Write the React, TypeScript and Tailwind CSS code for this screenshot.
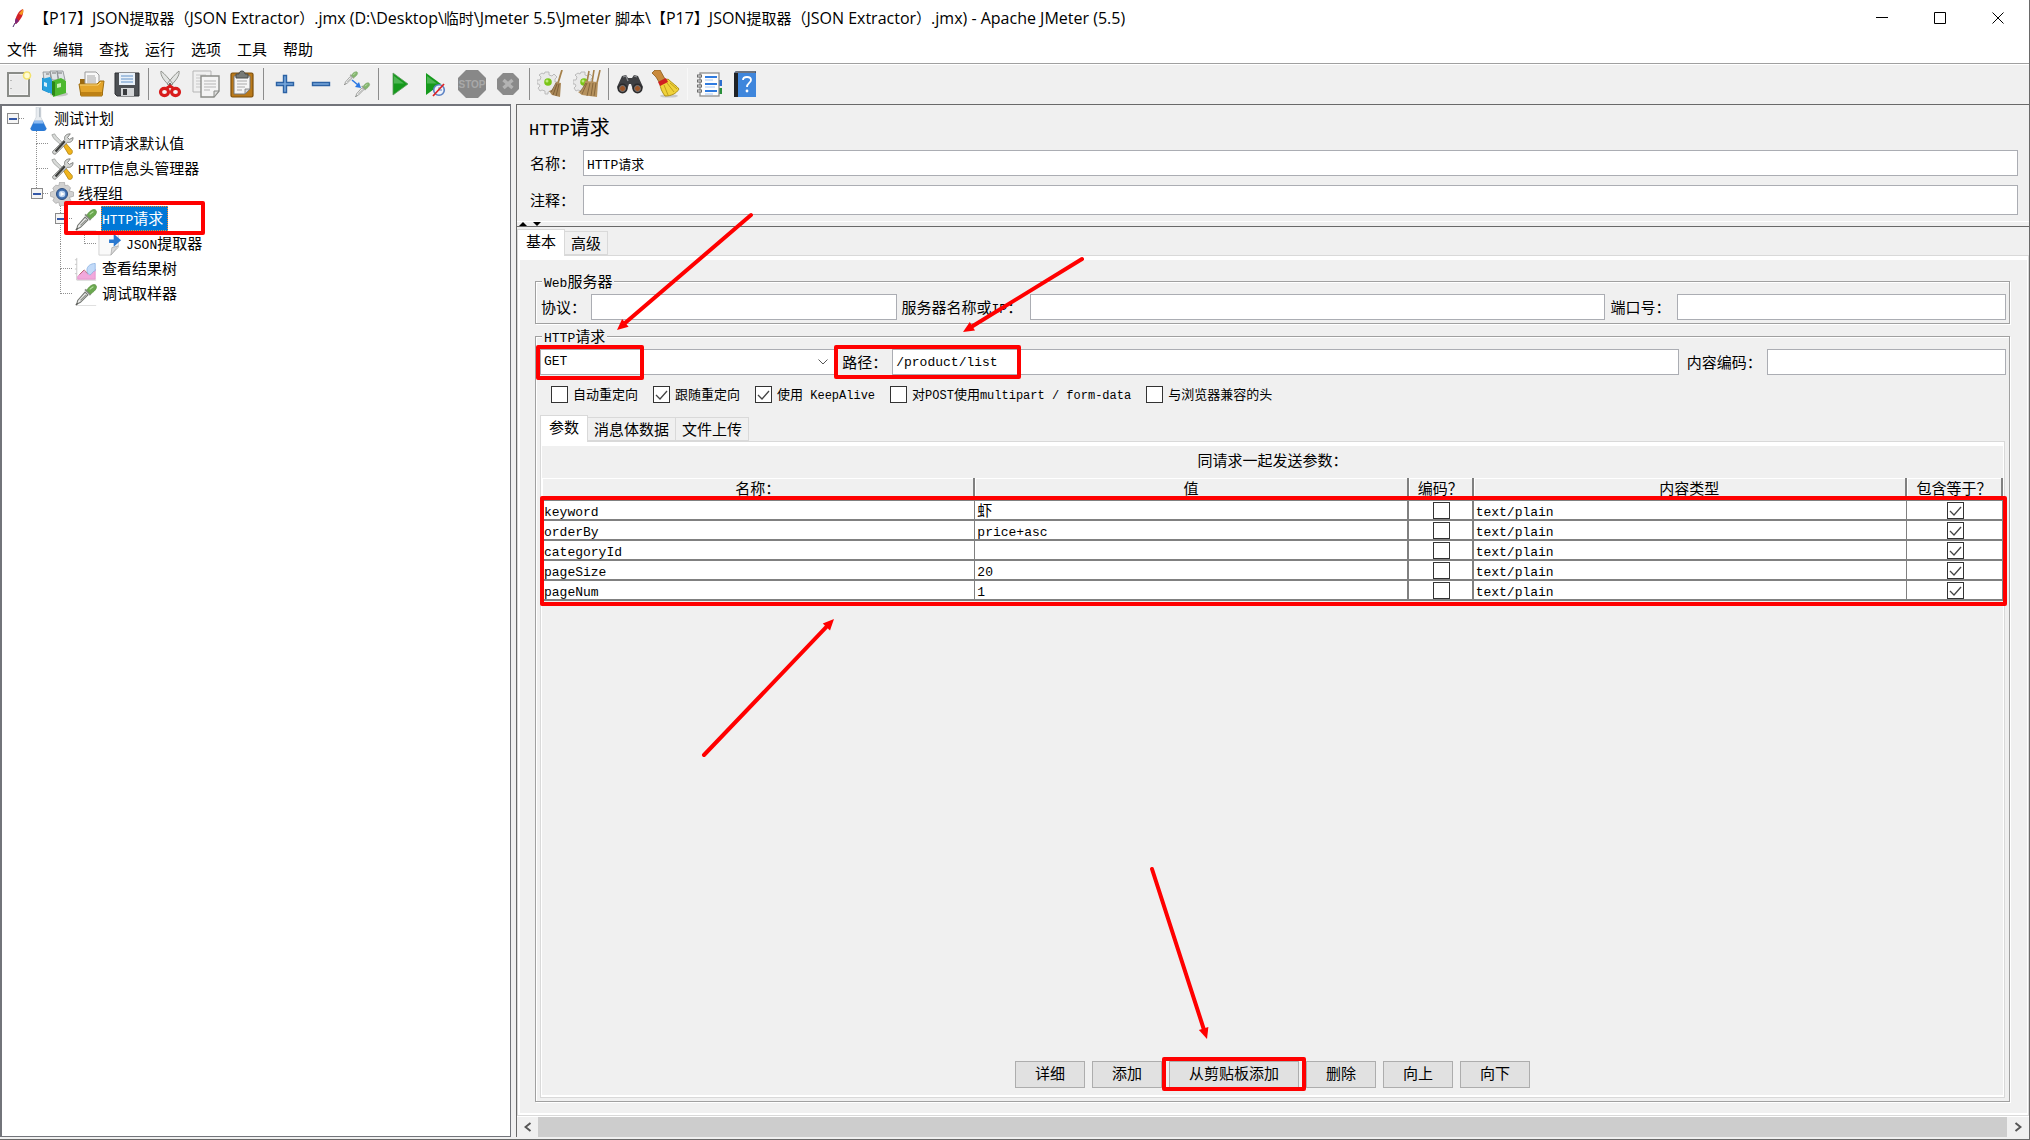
import { Fragment, useState } from 'react';
import type { ReactNode } from 'react';

const MENUS = ['文件', '编辑', '查找', '运行', '选项', '工具', '帮助'];

const PARAMS = [
  { name: 'keyword', value: '虾' },
  { name: 'orderBy', value: 'price+asc' },
  { name: 'categoryId', value: '' },
  { name: 'pageSize', value: '20' },
  { name: 'pageNum', value: '1' },
];

const field = 'h-[26px] min-w-0 border border-[#abadb3] bg-white px-[3px] text-[13px] outline-none font-["Liberation_Mono","Noto_Sans_CJK_SC",monospace]';
const mono = 'font-["Liberation_Mono",monospace]';

// Latin runs get their own face and size beside the Chinese text
function Text({ children, latin = `text-[13px] ${mono}` }: { children: string; latin?: string }) {
  const parts = children.split(/([\x20-\x7e]+)/).filter(Boolean);
  return (
    <>
      {parts.map((p, i) =>
        /^[\x20-\x7e]/.test(p) ? (
          <span key={i} className={`leading-none whitespace-pre ${latin}`}>{p}</span>
        ) : (
          <Fragment key={i}>{p}</Fragment>
        )
      )}
    </>
  );
}

function Mark({ className }: { className: string }) {
  return <span className={`pointer-events-none absolute z-10 rounded-[2px] border-4 border-[#ff0000] ${className}`} />;
}

function Checkbox({ id, label, checked = false }: { id: string; label?: string; checked?: boolean }) {
  return (
    <span className="relative block h-[17px] w-[17px] shrink-0">
      <input id={id} type="checkbox" aria-label={label} defaultChecked={checked} className="peer block h-[17px] w-[17px] appearance-none border border-[#333] bg-white" />
      <svg viewBox="0 0 17 17" className="pointer-events-none absolute inset-0 hidden peer-checked:block" fill="none" stroke="#444" strokeWidth="1.3">
        <path d="M3 9l4 4 7-8" />
      </svg>
    </span>
  );
}

/* ---------- toolbar icons ---------- */

function Icon({ children }: { children: ReactNode }) {
  return <svg viewBox="0 0 28 28" className="h-7 w-7">{children}</svg>;
}

const page = { fill: '#f4f4f4', stroke: '#8a8c88', strokeWidth: 1.4 };

const NewIcon = () => (
  <Icon>
    <rect x="3" y="3" width="21" height="23" {...page} strokeWidth="2" />
    <rect x="5" y="5" width="17" height="19" fill="#ebebeb" />
    <path d="M6 10v1M6 18v1" stroke="#888" />
    <circle cx="22" cy="5.500" r="3.500" fill="#fffbd0" stroke="#f3e26c" strokeWidth="1.600" />
  </Icon>
);

const TemplatesIcon = () => (
  <Icon>
    <ellipse cx="18" cy="24" rx="9" ry="2.500" fill="#c4c4c4" />
    <path d="M1 8l7-2v17l-7-3z" fill="#1b86c8" />
    <path d="M2 2h7l1 8H3zM9 1h7l1 9h-6zM16 1h6l2 9h-6z" fill="#dfe3e6" stroke="#84898d" strokeWidth=".8" />
    <path d="M5 4h3M11 3h4M17 3h4" stroke="#777" />
    <path d="M1 9l8-2 2 3v14l-9-4z" fill="#27a0dd" />
    <path d="M3 12l3 1v4l-3-1z" fill="#d8f0fb" />
    <path d="M11 11l9-3 5 3v12l-13 4z" fill="#4cb82f" />
    <path d="M11 11l3 1v14l-3-1z" fill="#2c8516" />
    <path d="M16 14l4-1v4l-4 1z" fill="#c9f0b8" />
  </Icon>
);

const OpenIcon = () => (
  <Icon>
    <path d="M3 9h7l2 2h14v14H3z" fill="#9b6a12" />
    <path d="M8 2h11l3 3v12H8z" fill="#f8f8f8" stroke="#9a9a9a" />
    <path d="M10 6h8M10 8h9M10 10h9M10 12h9" stroke="#a5a5a5" />
    <path d="M2 14h18l3-3h4l-2 15H4z" fill="#e3a52b" stroke="#a06f10" />
    <path d="M3 15h18l3-3" fill="none" stroke="#f7d47a" />
    <path d="M4 22h21l-1 4H4z" fill="#bd8115" />
  </Icon>
);

const SaveIcon = () => (
  <Icon>
    <path d="M2 3h24v23H4l-2-2z" fill="#4d5054" stroke="#2f3134" />
    <rect x="6" y="3" width="16" height="12" fill="#e9f1f9" />
    <path d="M8 6h12M8 9h12M8 12h12" stroke="#8fb1d8" strokeWidth="1.500" />
    <rect x="8" y="18" width="13" height="8" fill="#d4d6d8" />
    <rect x="10" y="19" width="4" height="6" fill="#3a3c3f" />
  </Icon>
);

const CutIcon = () => (
  <Icon>
    <path d="M5 1c-1 4 3 10 9 15l3-2C13 9 9 4 5 1zM23 1c1 4-3 10-9 15l-3-2C15 9 19 4 23 1z" fill="#e2e4e2" stroke="#888a85" strokeWidth=".9" />
    <circle cx="14" cy="14" r="1.200" fill="#666" />
    <ellipse cx="8.500" cy="22" rx="4" ry="3.600" fill="#f6f6f6" stroke="#d91c1c" strokeWidth="3.200" />
    <ellipse cx="19.500" cy="22" rx="4" ry="3.600" fill="#f6f6f6" stroke="#d91c1c" strokeWidth="3.200" />
    <path d="M11 18l3-2 3 2" stroke="#d91c1c" strokeWidth="3" fill="none" />
  </Icon>
);

const CopyIcon = () => (
  <Icon>
    <path d="M1 1h18v21H1z" fill="#f0f0f0" stroke="#b5b5b5" />
    <path d="M4 5h10M4 8h10M4 11h6M4 14h6M4 17h6" stroke="#c8c8c8" />
    <path d="M9 6h18v15l-5 6H9z" {...page} />
    <path d="M12 11h12M12 14h12M12 17h12M12 20h6" stroke="#b5b5b5" />
    <path d="M27 21l-5 6v-6z" fill="#ddd" stroke="#8a8c88" />
  </Icon>
);

const PasteIcon = () => (
  <Icon>
    <rect x="3" y="3" width="22" height="24" rx="1.500" fill="#b9791a" stroke="#7d4f0b" strokeWidth="1.200" />
    <path d="M6 6h16v13l-5 5H6z" fill="#f5f5f5" stroke="#777" />
    <path d="M9 11h10M9 14h10M9 17h8M9 20h5" stroke="#a9a9a9" />
    <path d="M22 19l-5 5v-5z" fill="#d5d5d5" stroke="#777" strokeWidth=".8" />
    <path d="M8 4h3c0-4 6-4 6 0h3v4H8z" fill="#777a76" stroke="#4b4d4a" />
  </Icon>
);

const PlusIcon = () => (
  <Icon>
    <path d="M12.500 5.500h3v7h7v3h-7v7h-3v-7h-7v-3h7z" fill="#78a8dc" stroke="#2c62a4" strokeWidth="1.400" />
  </Icon>
);

const MinusIcon = () => (
  <Icon>
    <path d="M5.500 12.500h17v3h-17z" fill="#78a8dc" stroke="#2c62a4" strokeWidth="1.400" />
  </Icon>
);

// pipette, also used for the samplers in the tree
const Dropper = () => (
  <>
    <path d="M3 24l1-4 8-9 3 3-8 8z" fill="#ececec" stroke="#757873" strokeWidth="1.200" />
    <path d="M2 25l2-2" stroke="#5a5c58" strokeWidth="1.400" fill="none" />
    <path d="M7 20l6-6" stroke="#8d908a" strokeWidth="1.200" fill="none" />
    <path d="M12 8l6 6" stroke="#8a8c88" strokeWidth="2.200" />
    <path d="M14 9c2-4 6-7 9-6 3 2 1 6-5 10z" fill="#6aa84f" stroke="#5c9145" strokeWidth=".8" />
    <path d="M17 8l4-3" stroke="#b8e0a4" strokeWidth="1.300" />
  </>
);

const ToggleIcon = () => (
  <Icon>
    <g transform="scale(.6)" opacity=".8"><Dropper /></g>
    <g transform="translate(11 11) scale(.64)" opacity=".8"><Dropper /></g>
    <path d="M9 10l6 5" stroke="#2b78e4" strokeWidth="1.600" />
    <path d="M18 18l-6-1 4-5z" fill="#2b78e4" />
  </Icon>
);

const PlayIcon = () => (
  <Icon>
    <path d="M7 3l15 11L7 25z" fill="#159a1c" stroke="#5f9d61" strokeWidth=".8" />
    <path d="M8 6l10 7.500H8z" fill="#4cb552" />
  </Icon>
);

const PlayNoTimersIcon = () => (
  <Icon>
    <path d="M4 3l15 11L4 25z" fill="#159a1c" />
    <path d="M5 6l10 7.500H5z" fill="#4cb552" />
    <circle cx="17" cy="20" r="5.300" fill="#eef2fa" stroke="#5b82c4" strokeWidth="1.600" />
    <path d="M17 17v3h3" stroke="#5b82c4" fill="none" />
    <path d="M11 26l11-12" stroke="#dd2222" strokeWidth="1.700" />
  </Icon>
);

const StopIcon = () => (
  <Icon>
    <path d="M8 0h12l8 8v12l-8 8H8l-8-8V8z" fill="#888" />
    <text x="14" y="18" textAnchor="middle" fontSize="10" fontWeight="700" fill="#a9a9a9" fontFamily="Liberation Sans, sans-serif">STOP</text>
  </Icon>
);

const ShutdownIcon = () => (
  <Icon>
    <path d="M9 3h10l6 6v10l-6 6H9l-6-6V9z" fill="#8a8a8a" />
    <path d="M9.500 10l9 8M18.500 10l-9 8" stroke="#b3b3b3" strokeWidth="3.400" />
  </Icon>
);

const Gear = () => (
  <>
    <path d="M8 2h4v3l3 1 2-2 3 3-2 2v3h3v4h-3l-1 3 2 2-3 2-2-2-3 1v2H8v-3l-3-1-2 1-2-3 2-2-1-2H0v-4h3l1-3-2-2 3-2 2 1z" fill="#e9e9e9" stroke="#b5b5b5" strokeWidth=".9" />
    <circle cx="11" cy="12" r="3.800" fill="#7bc518" />
    <circle cx="10" cy="11" r="1.500" fill="#bdec7a" />
  </>
);

const ClearIcon = () => (
  <Icon>
    <Gear />
    <path d="M25 0l-4 13" stroke="#a5804a" strokeWidth="1.800" />
    <path d="M19 12l5 1-1 14-8-2-3-4c4-1 6-4 7-9z" fill="#a88656" />
    <path d="M20 14l-4 11M22 14l-3 12M19 13l-5 9" stroke="#735630" strokeWidth=".8" />
  </Icon>
);

const ClearAllIcon = () => (
  <Icon>
    <Gear />
    <path d="M16 1l-2 11M21 0l-2 13M27 0l-3 13" stroke="#a5804a" strokeWidth="1.600" />
    <path d="M12 11l13 1-1 15-15-2-4-3c4-1 6-5 7-11z" fill="#b5915d" />
    <path d="M14 13l-5 11M17 13l-3 13M20 13l-2 13M23 13l-2 13M13 13l-6 9" stroke="#7a5c34" strokeWidth=".8" />
  </Icon>
);

const SearchIcon = () => (
  <Icon>
    <path d="M6 6l4-1 2 3h4l2-3 4 1 5 11-2 4-8-1-2-6h-2l-2 6-8 1-2-4z" fill="#3e3f42" />
    <path d="M7 7l3-1 2 5M18 6l3 1" stroke="#8b8d90" fill="none" strokeWidth="1.300" />
    <circle cx="6.500" cy="18.500" r="5" fill="#2a2a2c" />
    <circle cx="21.500" cy="18.500" r="5" fill="#2a2a2c" />
    <circle cx="6.500" cy="18.500" r="3" fill="#9c5426" stroke="#77787a" />
    <circle cx="21.500" cy="18.500" r="3" fill="#9c5426" stroke="#77787a" />
  </Icon>
);

const BroomIcon = () => (
  <Icon>
    <ellipse cx="17" cy="26" rx="9" ry="1.600" fill="#c8c8c8" />
    <path d="M0 3l3-3h5l5 9-6 3-3-5z" fill="#c98a3c" stroke="#8b5a1c" strokeWidth=".8" />
    <path d="M8 13l8-4c4 4 9 7 11 10-3 5-8 7-14 7-3-4-5-8-5-13z" fill="#f0d23a" stroke="#a8890f" strokeWidth=".9" />
    <path d="M12 15l4 10M15 13l7 9M18 13l7 6" stroke="#bfa01c" />
    <path d="M6 12l8-4 2 4-8 4z" fill="#d02020" />
  </Icon>
);

const FunctionIcon = () => (
  <Icon>
    <path d="M24 10h3v6h-3z" fill="#2d6fd0" />
    <path d="M24 18h3v6h-3z" fill="#2a8f3a" />
    <rect x="5" y="3" width="19" height="23" fill="#fdfdfd" stroke="#8f8f8f" strokeWidth="1.300" />
    <path d="M10 7h12M10 14h12M10 21h12" stroke="#2f7be0" strokeWidth="2" />
    <path d="M10 10h8M10 17h10M10 24h8" stroke="#a9c8f2" />
    <path d="M2 6h5M2 11h5M2 16h5M2 21h5" stroke="#6b6b6b" strokeWidth="3" />
    <path d="M3 6h3M3 11h3M3 16h3M3 21h3" stroke="#f4f4f4" />
  </Icon>
);

const HelpIcon = () => (
  <Icon>
    <path d="M3 3l2-2h20v24l-2 2H3z" fill="#2d4a78" />
    <rect x="3" y="3" width="4" height="24" fill="#1f2226" />
    <rect x="7" y="3" width="18" height="24" fill="#3f86dc" />
    <path d="M5 1h20l-1 2H4z" fill="#6d7480" />
    <path d="M12 10c0-4 8-4 8 0 0 3-4 3-4 7" stroke="#fff" strokeWidth="1.800" fill="none" />
    <circle cx="16" cy="21" r="1.400" fill="#fff" />
  </Icon>
);

const TOOLBAR = [
  [['新建', NewIcon], ['模板', TemplatesIcon], ['打开', OpenIcon], ['保存', SaveIcon]],
  [['剪切', CutIcon], ['复制', CopyIcon], ['粘贴', PasteIcon]],
  [['展开', PlusIcon], ['收起', MinusIcon], ['切换', ToggleIcon]],
  [['启动', PlayIcon], ['不停顿开始', PlayNoTimersIcon], ['停止', StopIcon], ['关闭', ShutdownIcon]],
  [['清除', ClearIcon], ['清除全部', ClearAllIcon]],
  [['查找', SearchIcon], ['重置搜索', BroomIcon]],
  [['函数助手', FunctionIcon], ['帮助', HelpIcon]],
] as const;

/* ---------- tree ---------- */

function TreeIcon({ children }: { children: ReactNode }) {
  return <svg viewBox="0 0 26 26" className="h-6 w-6 shrink-0">{children}</svg>;
}

const FlaskIcon = () => (
  <TreeIcon>
    <path d="M11 0h5v11l6 12c0 2-2 3-4 3H9c-2 0-4-1-4-3l6-12z" fill="#e8ecf0" stroke="#ccd2d8" strokeWidth=".8" />
    <path d="M9 15h9l4 8c0 2-1 3-3 3H8c-2 0-3-1-3-3z" fill="#2a7ad6" />
    <path d="M9 15h9l1 3H8z" fill="#8ebbf0" />
    <path d="M15 1v10" stroke="#9aa6b2" fill="none" />
  </TreeIcon>
);

const ToolsIcon = () => (
  <TreeIcon>
    <path d="M2 3l3-1 2 3 8 8-2 2-9-8z" fill="#d8dad8" stroke="#8b8d8a" strokeWidth=".7" />
    <path d="M14 14l3-2 7 8c1 3-1 5-4 4z" fill="#f0b41c" stroke="#a87a08" strokeWidth=".8" />
    <path d="M22 2l-3 4 2 2 4-2c0 4-3 6-6 5L7 23c-1 2-5 1-4-2L16 8c-1-3 1-6 6-6z" fill="#d5d7d5" stroke="#70726f" strokeWidth=".9" />
    <path d="M6 21l10-11" stroke="#3c3d3b" strokeWidth="2.400" />
  </TreeIcon>
);

const ThreadIcon = () => (
  <TreeIcon>
    <path d="M10.500 0h5l.8 4 3-.6 3 3-1.500 3.200 4.700 1.300v4.500l-4.500 1.300 1.500 3.300-3 3-3.200-1.200-.8 4.200h-5l-1-4.200-3.300 1.400-3-3L4.600 17 .5 15.500V11l4-1.300L3 6.500l3.200-3L9.500 4z" fill="#d0d0d0" stroke="#9e9e9e" strokeWidth=".7" />
    <circle cx="13" cy="13" r="6" fill="#3f6fb0" stroke="#28497b" />
    <circle cx="13" cy="13" r="3.600" fill="#b9d0ee" />
    <path d="M11.500 10.500l4.500 2.500-4.500 2.500z" fill="#fff" />
  </TreeIcon>
);

const DropperIcon = () => (
  <TreeIcon>
    <path d="M2 25.500h22" stroke="#dcdcdc" />
    <Dropper />
  </TreeIcon>
);

const ExtractorIcon = () => (
  <TreeIcon>
    <path d="M1 1h21v16l-8 8H1z" fill="#fafafa" stroke="#d0d0d0" />
    <path d="M22 15l-8 10 1-8z" fill="#dadada" stroke="#a8a8a8" strokeWidth=".8" />
    <path d="M12 8h5V2l8 7-8 7v-4h-5z" fill="#2a78cf" />
  </TreeIcon>
);

const ChartIcon = () => (
  <TreeIcon>
    <path d="M3 1v24M1 3h2M1 8h2M1 13h2M1 18h2M3 25h21" stroke="#c5c5c5" />
    <path d="M4 24v-3l6-6 4 3 3 2 6-7v11z" fill="#f2a8dc" stroke="#e08cc8" strokeWidth=".8" />
    <path d="M6 19l5-5 4 4" fill="none" stroke="#b55a6a" />
    <path d="M14 14c0-4 4-7 9-7v8c-3 0-4 5-6 4-2 0-3-3-3-5z" fill="#c2daf8" stroke="#86aee0" strokeWidth=".8" />
  </TreeIcon>
);

// one 24px column of the guide lines; n/e/s are the directions in which a dotted line leaves the middle
function Guide({ lines, open }: { lines: string; open?: boolean }) {
  return (
    <svg viewBox="0 0 24 25" className="h-[25px] w-6 shrink-0" shapeRendering="crispEdges">
      <g stroke="#909090" strokeDasharray="1 1">
        {lines.includes('n') && <path d="M10.500 0v13" />}
        {lines.includes('s') && <path d="M10.500 13v12" />}
        {lines.includes('e') && <path d="M11 12.500h12" />}
      </g>
      {open && (
        <>
          <rect x="5.500" y="7.500" width="11" height="10" fill="#f5f5f5" stroke="#8a8a8a" />
          <path d="M7 12.500h8" stroke="#3458a8" strokeWidth="2" />
        </>
      )}
    </svg>
  );
}

const TREE = [
  { label: '测试计划', icon: FlaskIcon, guides: ['e'], open: true },
  { label: 'HTTP请求默认值', icon: ToolsIcon, guides: ['', 'nse'] },
  { label: 'HTTP信息头管理器', icon: ToolsIcon, guides: ['', 'nse'] },
  { label: '线程组', icon: ThreadIcon, guides: ['', 'ne'], open: true },
  { label: 'HTTP请求', icon: DropperIcon, guides: ['', '', 'nse'], open: true, selected: true },
  { label: 'JSON提取器', icon: ExtractorIcon, guides: ['', '', 'ns', 'ne'] },
  { label: '查看结果树', icon: ChartIcon, guides: ['', '', 'nse'] },
  { label: '调试取样器', icon: DropperIcon, guides: ['', '', 'ne'] },
];

function Tree() {
  return (
    <aside className="w-[511px] shrink-0 border-2 border-r border-b border-[#72747a] bg-white">
      <ul>
        {TREE.map((row, i) => (
          <li key={i} className="relative flex h-[25px] items-center">
            {row.guides.map((g, k) => (
              <Guide key={k} lines={g} open={row.open && k === row.guides.length - 1} />
            ))}
            <row.icon />
            <span className={row.selected ? 'ml-[3px] h-[25px] border border-dotted border-[#ff8728] bg-[#0078d7] pr-1 leading-[22px] text-white' : 'ml-1 pb-[2px] leading-[22px]'}>
              <Text>{row.label}</Text>
            </span>
            {row.selected && <Mark className="-top-[5px] -bottom-1 left-[62px] w-[141px]" />}
          </li>
        ))}
      </ul>
    </aside>
  );
}

/* ---------- tabs ---------- */

function Tabs({ items }: { items: string[] }) {
  const [active, setActive] = useState(0);
  return (
    <div role="tablist" className="relative z-[1] -mb-px flex h-[27px] items-end">
      {items.map((t, i) => (
        <button
          key={t}
          role="tab"
          aria-selected={i === active}
          onClick={() => setActive(i)}
          className={
            i === active
              ? 'h-[27px] border border-b-0 border-[#d9d9d9] bg-white px-2 pb-[5px]'
              : 'mb-px h-6 border border-l-0 border-[#d9d9d9] px-[6px]'
          }
        >
          {t}
        </button>
      ))}
    </div>
  );
}

const group = 'min-w-0 border border-[#a0a0a0] pt-[3px] shadow-[1px_1px_0_#fff,inset_1px_1px_0_#fff]';
const legend = 'ml-[6px] h-5 bg-[#f0f0f0] px-[2px]';

function ParamsTable() {
  const head = 'h-[23px] border-r-2 border-b border-[#808080] p-0 pb-[3px] text-center font-normal leading-[18px] shadow-[inset_1px_1px_0_#fff]';
  const cell = 'h-5 border-r border-b-2 border-[#808080] bg-white p-0 pl-[2px] leading-[18px] whitespace-nowrap';
  return (
    <div className="relative">
      <table className="w-full table-fixed border-separate border-spacing-0">
        <colgroup>
          <col />
          <col />
          <col className="w-[65px]" />
          <col />
          <col className="w-24" />
        </colgroup>
        <thead>
          <tr>
            {['名称：', '值', '编码？', '内容类型', '包含等于？'].map(h => (
              <th key={h} className={head}>{h}</th>
            ))}
          </tr>
        </thead>
        <tbody>
          {PARAMS.map(p => (
            <tr key={p.name}>
              <td className={cell}><Text>{p.name}</Text></td>
              <td className={`${cell} border-r-2`}><Text>{p.value}</Text></td>
              <td className={`${cell} border-r-2`}>
                <div className="flex justify-center"><Checkbox id={`encode-${p.name}`} label={`${p.name} 编码`} /></div>
              </td>
              <td className={cell}><Text>text/plain</Text></td>
              <td className={cell}>
                <div className="flex justify-center"><Checkbox id={`equals-${p.name}`} label={`${p.name} 包含等于`} checked /></div>
              </td>
            </tr>
          ))}
        </tbody>
      </table>
      <Mark className="top-[18px] -right-1 -bottom-[5px] -left-[2px]" />
    </div>
  );
}

function HttpRequest() {
  return (
    <fieldset className={`${group} mt-[2px] flex flex-1 flex-col pb-[3px]`}>
      <legend className={legend}><Text>HTTP请求</Text></legend>
      <div className="flex items-center pr-[3px] pl-1">
        <div className="relative min-w-0 flex-[295]">
          <select aria-label="方法" className={`${field} block w-full appearance-none border-[#7a7a7a]`} defaultValue="GET">
            <option>GET</option>
            <option>POST</option>
            <option>PUT</option>
            <option>DELETE</option>
          </select>
          <svg viewBox="0 0 10 6" className="pointer-events-none absolute top-[10px] right-[7px] h-[6px] w-[10px]" fill="none" stroke="#555">
            <path d="M.5.500L5 5 9.500.500" />
          </svg>
          <Mark className="-top-1 -bottom-[5px] -left-1 w-[108px]" />
        </div>
        <div className="relative ml-[7px] flex min-w-0 flex-[836] items-center">
          <label htmlFor="path" className="w-[50px] shrink-0">路径：</label>
          <input id="path" defaultValue="/product/list" className={`${field} flex-1`} />
          <Mark className="-top-1 -bottom-1 -left-2 w-[187px]" />
        </div>
        <label htmlFor="encoding" className="ml-2 w-20 shrink-0">内容编码：</label>
        <input id="encoding" className={`${field} flex-[231]`} />
      </div>

      <div className="mt-[11px] flex h-[17px] items-center gap-[15px] pl-[15px] text-[13px]">
        {[
          ['自动重定向', false],
          ['跟随重定向', true],
          ['使用 KeepAlive', true],
          ['对POST使用multipart / form-data', false],
          ['与浏览器兼容的头', false],
        ].map(([label, on], i) => (
          <span key={i} className="flex items-center gap-[5px]">
            <Checkbox id={`opt-${i}`} checked={on as boolean} />
            <label htmlFor={`opt-${i}`} className="pb-[2px]"><Text latin={`text-[12px] ${mono}`}>{label as string}</Text></label>
          </span>
        ))}
      </div>

      <div className="mt-3 mr-1 ml-1 flex flex-1 flex-col">
        <Tabs items={['参数', '消息体数据', '文件上传']} />
        <div className="flex flex-1 flex-col border border-[#d9d9d9]">
          <div className="flex flex-1 flex-col border border-t-4 border-b-2 border-white">
            <p className="pb-1 text-center leading-7">同请求一起发送参数：</p>
            <ParamsTable />
            <div className="flex-1" />
            <div className="flex justify-center gap-[7px] pb-[7px]">
              {['详细', '添加', '从剪贴板添加', '删除', '向上', '向下'].map(b => (
                <button key={b} className="relative h-[27px] border border-[#adadad] bg-[#e1e1e1] px-[19px] pb-[3px]">
                  {b}
                  {b === '从剪贴板添加' && <Mark className="-inset-x-2 -top-[5px] -bottom-1" />}
                </button>
              ))}
            </div>
          </div>
        </div>
      </div>
    </fieldset>
  );
}

function Sampler() {
  return (
    <main className="ml-[5px] flex min-w-0 flex-1 flex-col border-t border-l border-[#696969]">
      <h1 className="h-[45px] pl-3 text-xl leading-[43px]"><Text latin={`text-[17px] ${mono}`}>HTTP请求</Text></h1>
      <div className="flex items-center pr-[11px] pl-[13px]">
        <label htmlFor="name" className="w-[53px] shrink-0">名称：</label>
        <input id="name" defaultValue="HTTP请求" className={`${field} flex-1`} />
      </div>
      <div className="mt-[9px] flex items-center pr-[11px] pl-[13px]">
        <label htmlFor="comment" className="w-[53px] shrink-0">注释：</label>
        <input id="comment" className={`${field} h-[30px] flex-1`} />
      </div>
      <div className="mt-[6px] h-[6px] border-t border-b border-t-white border-b-[#696969] pl-[2px]">
        <svg viewBox="0 0 24 4" className="h-1 w-6"><path d="M0 4l4-4 4 4zM14 0h8l-4 4z" /></svg>
      </div>

      <div className="mt-[2px] flex flex-1 flex-col">
        <Tabs items={['基本', '高级']} />
        <div className="flex flex-1 flex-col border border-[#d9d9d9]">
          <div className="flex flex-1 flex-col border-2 border-t-4 border-r border-white pt-[11px] pr-[17px] pb-[11px] pl-[15px]">
            <fieldset className={`${group} pb-[3px]`}>
              <legend className={legend}><Text>Web服务器</Text></legend>
              <div className="flex items-center pr-[3px] pl-[5px]">
                <label htmlFor="protocol" className="w-[50px] shrink-0">协议：</label>
                <input id="protocol" className={`${field} flex-[297]`} />
                <label htmlFor="server" className="ml-[5px] w-32 shrink-0"><Text>服务器名称或IP：</Text></label>
                <input id="server" className={`${field} flex-[567]`} />
                <label htmlFor="port" className="ml-[5px] w-[67px] shrink-0">端口号：</label>
                <input id="port" className={`${field} flex-[320]`} />
              </div>
            </fieldset>
            <HttpRequest />
          </div>
        </div>
      </div>

      <div className="flex h-[21px] border-t border-white">
        <button aria-label="向左滚动" className="flex w-[21px] items-center justify-center">
          <svg viewBox="0 0 8 10" className="h-[10px] w-2" fill="none" stroke="#555" strokeWidth="2"><path d="M6.500 1l-5 4 5 4" /></svg>
        </button>
        <div className="flex-1 bg-[#cdcdcd]" />
        <button aria-label="向右滚动" className="flex w-[22px] items-center justify-center">
          <svg viewBox="0 0 8 10" className="h-[10px] w-2" fill="none" stroke="#555" strokeWidth="2"><path d="M1.500 1l5 4-5 4" /></svg>
        </button>
      </div>
    </main>
  );
}

const ARROWS = [
  [751, 215, 617, 330],
  [1082, 259, 963, 332],
  [704, 755, 834, 619],
  [1152, 869, 1207, 1039],
];

function Arrows() {
  return (
    <svg className="pointer-events-none absolute inset-0 z-20 h-full w-full" stroke="#f00" fill="#f00">
      {ARROWS.map(([x1, y1, x2, y2], i) => {
        const len = Math.hypot(x2 - x1, y2 - y1);
        const ux = (x2 - x1) / len;
        const uy = (y2 - y1) / len;
        const bx = x2 - ux * 11;
        const by = y2 - uy * 11;
        return (
          <g key={i}>
            <line x1={x1} y1={y1} x2={bx} y2={by} strokeWidth="4" strokeLinecap="round" />
            <path stroke="none" d={`M${x2} ${y2}L${bx - uy * 5} ${by + ux * 5}L${bx + uy * 5} ${by - ux * 5}Z`} />
          </g>
        );
      })}
    </svg>
  );
}

export default function App() {
  return (
    <div className='relative flex min-h-screen flex-col border-r border-b border-[#696969] bg-[#f0f0f0] text-[15px] leading-5 text-black font-["Noto_Sans_CJK_SC",sans-serif]'>
      <header className='border-b border-[#a0a0a0] bg-white font-["Open_Sans","Noto_Sans_CJK_SC",sans-serif]'>
        <div className="flex h-9 items-center pl-3">
          <svg viewBox="0 0 12 20" className="mr-[10px] h-5 w-3 shrink-0">
            <path d="M11 1c1 4-1 10-7 15l-1-1C3 9 7 2 11 1z" fill="#d22128" />
            <path d="M11 1c1 2 0 4-1 6L7 6c1-2 3-4 4-5z" fill="#f69923" />
            <path d="M4 16l-1-1c0-2 0-3 1-5l3 3z" fill="#7e2678" />
            <path d="M3 15l-2 4" stroke="#4a2a6a" />
          </svg>
          <span className="truncate">
            <Text latin="text-base">{'【P17】JSON提取器（JSON Extractor）.jmx (D:\\Desktop\\临时\\Jmeter 5.5\\Jmeter 脚本\\【P17】JSON提取器（JSON Extractor）.jmx) - Apache JMeter (5.5)'}</Text>
          </span>
          <div className="mr-[2px] ml-auto flex">
            {[['最小化', 'M0 5.500h12'], ['最大化', 'M.5.500h11v11H.5z'], ['关闭', 'M.5.500l11 11M11.500.500l-11 11']].map(([name, d]) => (
              <button key={name} aria-label={name} className="flex h-9 w-[58px] items-center justify-center">
                <svg viewBox="0 0 12 12" className="h-3 w-3" fill="none" stroke="#000"><path d={d} /></svg>
              </button>
            ))}
          </div>
        </div>
        <nav className="flex h-[27px] gap-4 pl-[7px]">
          {MENUS.map(m => (
            <button key={m} className="leading-[27px]">{m}</button>
          ))}
        </nav>
      </header>

      <div className="flex h-10 items-center border-t border-white pb-[2px] pl-px">
        {TOOLBAR.map((grp, i) => (
          <Fragment key={i}>
            {i > 0 && (
              <span className="flex h-8 w-[7px] justify-center">
                <i className={i === TOOLBAR.length - 1 ? 'w-px bg-[#f8f8f8]' : 'w-px bg-[#8c8c8c]'} />
              </span>
            )}
            {grp.map(([name, Ico]) => (
              <button key={name} aria-label={name} className="flex w-9 justify-center"><Ico /></button>
            ))}
          </Fragment>
        ))}
      </div>

      <div className="flex flex-1 pb-[2px]">
        <Tree />
        <Sampler />
      </div>
      <Arrows />
    </div>
  );
}
